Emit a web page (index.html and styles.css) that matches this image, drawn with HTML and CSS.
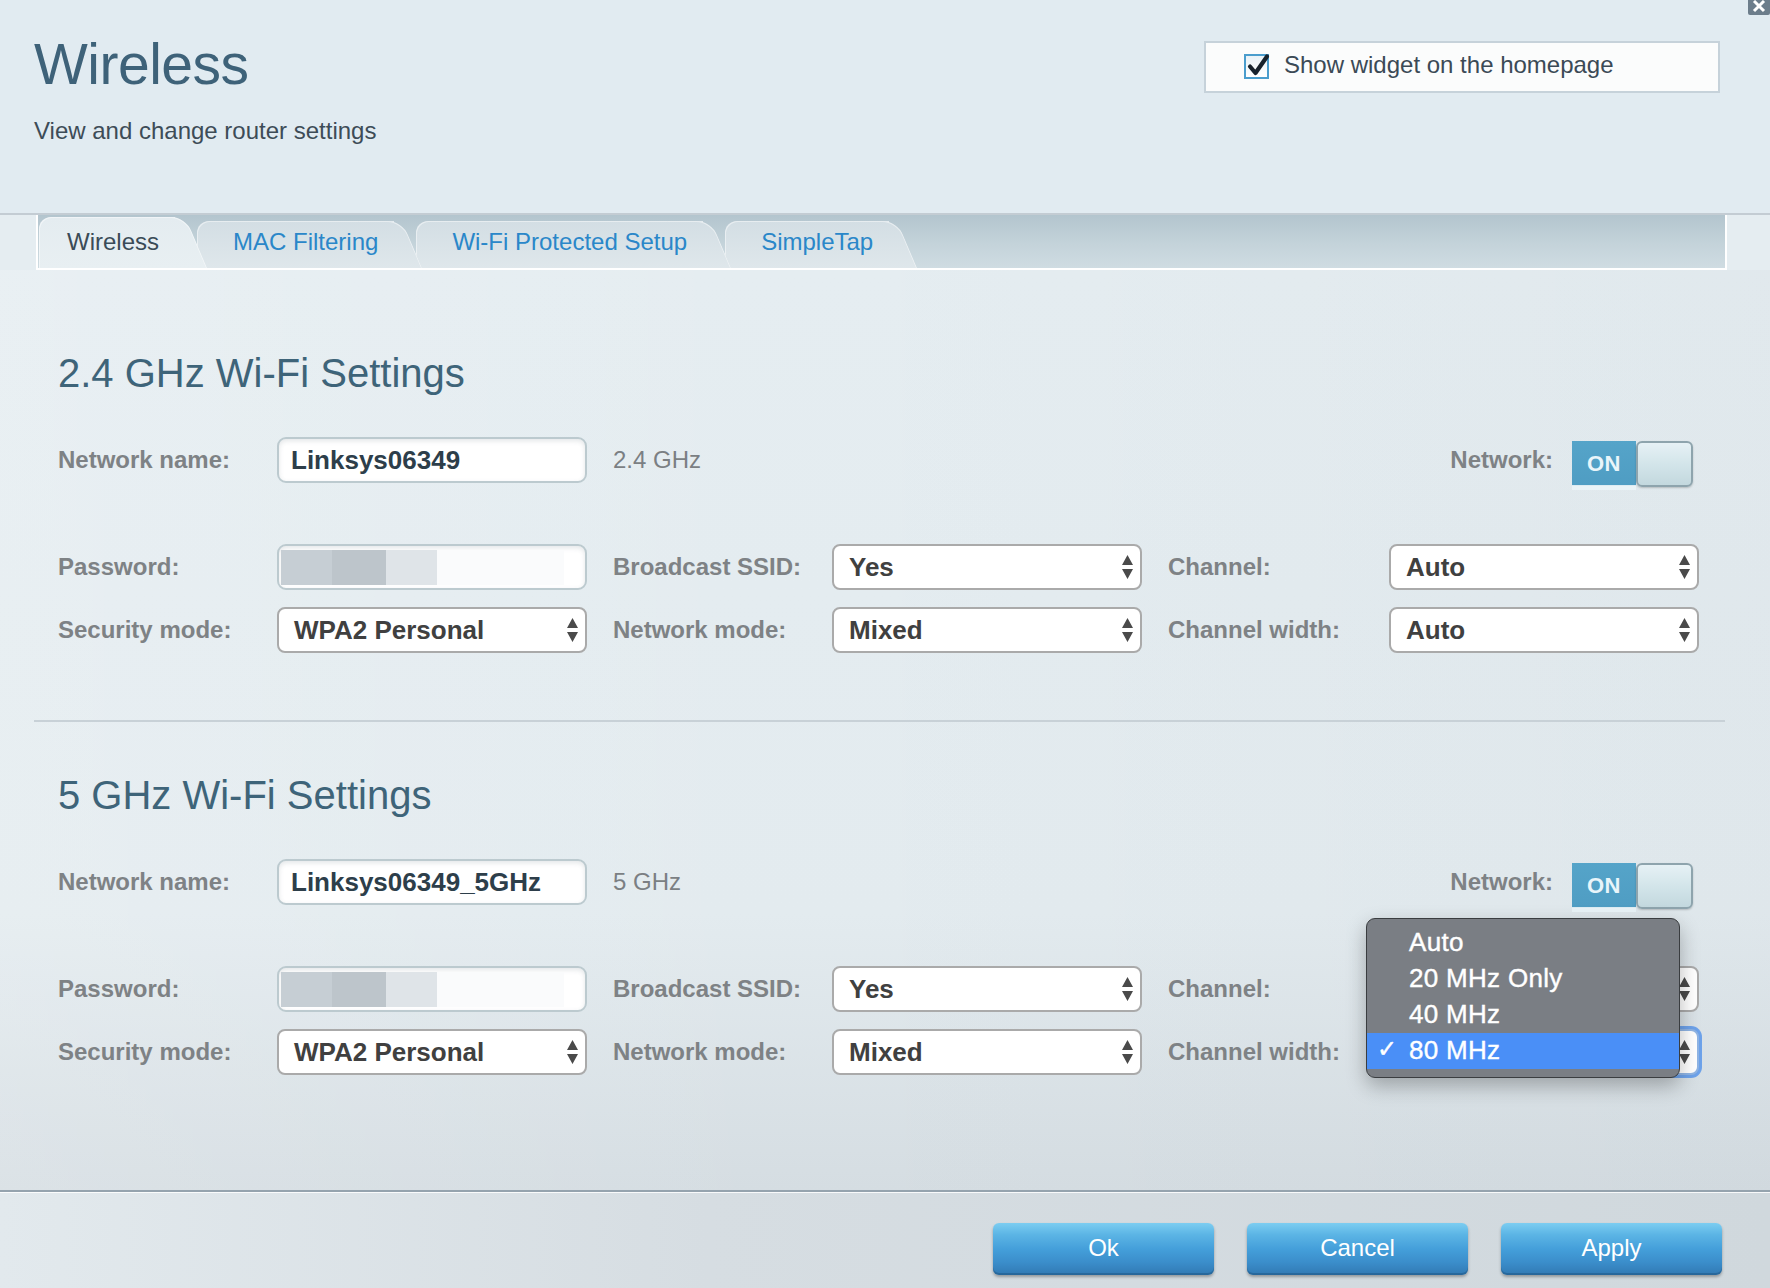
FILE: index.html
```html
<!DOCTYPE html>
<html lang="en">
<head>
<meta charset="utf-8">
<title>Wireless</title>
<link rel="stylesheet" href="styles.css">
</head>
<body>
<div class="page">
  <header class="header">
    <div class="title-block">
      <h1 class="title">Wireless</h1>
      <p class="subtitle">View and change router settings</p>
    </div>
    <label class="widget-box">
      <span class="checkbox">
        <svg width="27" height="27" viewBox="0 0 27 27"><path d="M5 13.5 L10.5 20 L22 3.5" fill="none" stroke="#17222c" stroke-width="4.2" stroke-linecap="round" stroke-linejoin="round"/></svg>
      </span>
      <span class="widget-text">Show widget on the homepage</span>
    </label>
    <span class="close-icon">
      <svg width="22" height="15" viewBox="0 0 22 15"><rect x="0" y="-4" width="22" height="19" rx="2" fill="#6c7d8b"/><path d="M6 1 L11 6 L16 1 M6 11 L11 6 L16 11" fill="none" stroke="#ffffff" stroke-width="3"/></svg>
    </span>
  </header>

  <nav class="tabbar">
    <span class="tab active">Wireless</span>
    <span class="tab">MAC Filtering</span>
    <span class="tab">Wi-Fi Protected Setup</span>
    <span class="tab">SimpleTap</span>
  </nav>

  <main class="content">
    <section class="wifi">
      <h2 class="section-title">2.4 GHz Wi-Fi Settings</h2>
      <div class="row row-first">
        <span class="label">Network name:</span>
        <span class="field input">Linksys06349</span>
        <span class="band">2.4 GHz</span>
        <span class="net-group">
          <span class="label">Network:</span>
          <span class="toggle"><span class="toggle-on">ON</span><span class="toggle-knob"></span></span>
        </span>
      </div>
      <div class="row row-second">
        <span class="label">Password:</span>
        <span class="field input password"><span class="pw b1"></span><span class="pw b2"></span><span class="pw b3"></span><span class="pw b4"></span></span>
        <span class="label label-mid">Broadcast SSID:</span>
        <span class="field select">Yes<svg class="arrows" width="11" height="24" viewBox="0 0 11 24"><path d="M0 10 L5.5 0 L11 10 Z M0 14 L11 14 L5.5 24 Z" fill="#4a4a4a"/></svg></span>
        <span class="label label-mid">Channel:</span>
        <span class="field select">Auto<svg class="arrows" width="11" height="24" viewBox="0 0 11 24"><path d="M0 10 L5.5 0 L11 10 Z M0 14 L11 14 L5.5 24 Z" fill="#4a4a4a"/></svg></span>
      </div>
      <div class="row row-third">
        <span class="label">Security mode:</span>
        <span class="field select">WPA2 Personal<svg class="arrows" width="11" height="24" viewBox="0 0 11 24"><path d="M0 10 L5.5 0 L11 10 Z M0 14 L11 14 L5.5 24 Z" fill="#4a4a4a"/></svg></span>
        <span class="label label-mid">Network mode:</span>
        <span class="field select">Mixed<svg class="arrows" width="11" height="24" viewBox="0 0 11 24"><path d="M0 10 L5.5 0 L11 10 Z M0 14 L11 14 L5.5 24 Z" fill="#4a4a4a"/></svg></span>
        <span class="label label-mid">Channel width:</span>
        <span class="field select">Auto<svg class="arrows" width="11" height="24" viewBox="0 0 11 24"><path d="M0 10 L5.5 0 L11 10 Z M0 14 L11 14 L5.5 24 Z" fill="#4a4a4a"/></svg></span>
      </div>
    </section>

    <hr class="divider">

    <section class="wifi wifi-second">
      <h2 class="section-title">5 GHz Wi-Fi Settings</h2>
      <div class="row row-first">
        <span class="label">Network name:</span>
        <span class="field input">Linksys06349_5GHz</span>
        <span class="band">5 GHz</span>
        <span class="net-group">
          <span class="label">Network:</span>
          <span class="toggle"><span class="toggle-on">ON</span><span class="toggle-knob"></span></span>
        </span>
      </div>
      <div class="row row-second">
        <span class="label">Password:</span>
        <span class="field input password"><span class="pw b1"></span><span class="pw b2"></span><span class="pw b3"></span><span class="pw b4"></span></span>
        <span class="label label-mid">Broadcast SSID:</span>
        <span class="field select">Yes<svg class="arrows" width="11" height="24" viewBox="0 0 11 24"><path d="M0 10 L5.5 0 L11 10 Z M0 14 L11 14 L5.5 24 Z" fill="#4a4a4a"/></svg></span>
        <span class="label label-mid">Channel:</span>
        <span class="field select"><svg class="arrows" width="11" height="24" viewBox="0 0 11 24"><path d="M0 10 L5.5 0 L11 10 Z M0 14 L11 14 L5.5 24 Z" fill="#4a4a4a"/></svg></span>
      </div>
      <div class="row row-third">
        <span class="label">Security mode:</span>
        <span class="field select">WPA2 Personal<svg class="arrows" width="11" height="24" viewBox="0 0 11 24"><path d="M0 10 L5.5 0 L11 10 Z M0 14 L11 14 L5.5 24 Z" fill="#4a4a4a"/></svg></span>
        <span class="label label-mid">Network mode:</span>
        <span class="field select">Mixed<svg class="arrows" width="11" height="24" viewBox="0 0 11 24"><path d="M0 10 L5.5 0 L11 10 Z M0 14 L11 14 L5.5 24 Z" fill="#4a4a4a"/></svg></span>
        <span class="label label-mid">Channel width:</span>
        <span class="field select focused"><svg class="arrows" width="11" height="24" viewBox="0 0 11 24"><path d="M0 10 L5.5 0 L11 10 Z M0 14 L11 14 L5.5 24 Z" fill="#4a4a4a"/></svg>
          <span class="menu">
            <span class="menu-item">Auto</span>
            <span class="menu-item">20 MHz Only</span>
            <span class="menu-item">40 MHz</span>
            <span class="menu-item selected"><span class="tick">✓</span>80 MHz</span>
          </span>
        </span>
      </div>
    </section>
  </main>

  <footer class="footer">
    <button class="btn">Ok</button>
    <button class="btn">Cancel</button>
    <button class="btn">Apply</button>
  </footer>
</div>
</body>
</html>
```
FILE: styles.css
```css
* { box-sizing: border-box; }

body {
  margin: 0;
  width: 1770px;
  height: 1288px;
  overflow: hidden;
  font-family: "Liberation Sans", Arial, Helvetica, sans-serif;
  background: #e5edf1;
}

.page {
  display: flex;
  flex-direction: column;
  height: 1288px;
  background: #e5edf1;
}

/* ---------- header ---------- */
.header {
  position: relative;
  flex: none;
  height: 215px;
  background: #e1ebf1;
  border-bottom: 2px solid #c3ccd3;
  display: flex;
  justify-content: space-between;
  align-items: flex-start;
  padding: 0 50px 0 34px;
}

.title {
  margin: 32px 0 0;
  font-size: 57px;
  font-weight: 400;
  line-height: 64px;
  color: #3e6279;
  letter-spacing: -0.5px;
}

.subtitle {
  margin: 21px 0 0;
  font-size: 24px;
  line-height: 28px;
  color: #3d4c57;
}

.widget-box {
  margin-top: 41px;
  width: 516px;
  height: 52px;
  border: 2px solid #c6d2da;
  background: #fbfcfc;
  display: flex;
  align-items: center;
  padding-left: 38px;
  gap: 15px;
}

.checkbox {
  position: relative;
  width: 25px;
  height: 25px;
  margin-bottom: 2px;
  border: 2px solid #4a9dcd;
  background: linear-gradient(#e9f2f7, #ffffff);
  display: flex;
  align-items: center;
  justify-content: center;
}

.checkbox svg {
  position: absolute;
  left: -1px;
  top: -3px;
}

.widget-text {
  font-size: 24px;
  color: #3b4a56;
  padding-bottom: 5px;
}

.close-icon {
  position: absolute;
  top: 0;
  right: 0;
  width: 22px;
  height: 15px;
  display: block;
}

.close-icon svg { display: block; }

/* ---------- tabs ---------- */
.tabbar {
  flex: none;
  height: 55px;
  margin: 0 43px 0 36px;
  border: 2px solid #ffffff;
  border-top: 0;
  background: linear-gradient(180deg, #b3c5ce 0%, #c4d3da 55%, #cfdce2 100%);
  display: flex;
  align-items: flex-end;
  padding-left: 1px;
}

.tab {
  position: relative;
  height: 47px;
  padding: 0 16px 5px 36px;
  margin-right: 22px;
  display: flex;
  align-items: center;
  font-size: 24px;
  color: #2a87c9;
  background: linear-gradient(180deg, #d3dee4 0%, #dfe7eb 100%);
  border-top-left-radius: 12px;
  box-shadow: inset 1px 1px 0 rgba(255,255,255,0.45);
  z-index: 3;
}

.tab::after {
  content: "";
  position: absolute;
  top: 0;
  bottom: 0;
  right: -28px;
  width: 44px;
  background: linear-gradient(180deg, #d3dee4 0%, #dfe7eb 100%);
  border-top-right-radius: 14px;
  box-shadow: inset -1px 1px 0 rgba(255,255,255,0.45);
  transform: skewX(23deg);
  transform-origin: bottom left;
  z-index: -1;
}

.tab:nth-child(2) { z-index: 3; }
.tab:nth-child(3) { z-index: 2; }
.tab:nth-child(4) { z-index: 1; }

.tab.active {
  height: 51px;
  padding-left: 28px;
  padding-bottom: 2px;
  color: #3a4b57;
  background: linear-gradient(180deg, #e4ecf0 0%, #e8eff2 100%);
  z-index: 5;
}

.tab.active::after {
  right: -32px;
  background: linear-gradient(180deg, #e4ecf0 0%, #e8eff2 100%);
}

/* ---------- content ---------- */
.content {
  flex: 1;
  background:
    linear-gradient(90deg, rgba(255,255,255,0.15) 0%, rgba(255,255,255,0) 45%, rgba(0,20,40,0.02) 100%),
    linear-gradient(180deg, #e5edf1 0%, #e3ebef 70%, #d5dde2 100%);
}

.wifi {
  padding: 79px 0 0 58px;
}

.wifi-second {
  padding-top: 49px;
}

.section-title {
  margin: 0 0 40px;
  font-size: 40px;
  font-weight: 400;
  line-height: 48px;
  color: #3e6479;
}

.row {
  display: grid;
  grid-template-columns: 219px 310px 245px 310px 247px 310px;
  grid-template-rows: 46px;
  height: 46px;
  align-items: center;
}

.row-first { margin-bottom: 61px; }
.row-second { margin-bottom: 17px; }

.label {
  font-size: 24px;
  font-weight: 700;
  color: #7e8285;
  white-space: nowrap;
}

.label-mid { padding-left: 26px; }

.band {
  grid-column: 3 / 5;
  padding-left: 26px;
  font-size: 24px;
  color: #7b7f83;
}

.net-group {
  grid-column: 5 / 7;
  height: 46px;
  display: flex;
  justify-content: flex-end;
  align-items: center;
  gap: 19px;
  padding-right: 6px;
}

.field {
  height: 46px;
  display: flex;
  align-items: center;
  font-size: 26px;
  font-weight: 700;
  white-space: nowrap;
}

.input {
  border: 2px solid #bccacf;
  border-radius: 9px;
  background: #ffffff;
  box-shadow: inset 0 2px 5px rgba(60, 80, 90, 0.14);
  padding-left: 12px;
  color: #2d3e4a;
}

.input.password {
  padding-left: 2px;
}

.pw { display: block; height: 35px; }
.b1 { width: 51px; background: #c6ced4; }
.b2 { width: 54px; background: #bdc5cb; }
.b3 { width: 51px; background: #dfe4e8; }
.b4 { width: 127px; background: #fafbfc; }

.select {
  position: relative;
  border: 2px solid #aaaaaa;
  border-radius: 8px;
  background: #ffffff;
  padding-left: 15px;
  color: #404040;
}

.arrows {
  position: absolute;
  right: 7px;
  top: 9px;
}

.select.focused {
  box-shadow: 0 0 0 3px #6da2ea;
  border-color: #8fb4e4;
}

/* ---------- toggle ---------- */
.toggle {
  display: flex;
  align-self: flex-start;
  width: 121px;
  height: 49px;
  margin-top: 4px;
  flex: none;
}

.toggle-on {
  width: 64px;
  height: 49px;
  display: flex;
  align-items: center;
  justify-content: center;
  padding-bottom: 4px;
  font-size: 22px;
  font-weight: 700;
  letter-spacing: 0.5px;
  color: #e9f5fa;
  background: linear-gradient(180deg, #55a4c9 0%, #4f9dc3 89%, #e9f3f7 91%, #e9f3f7 100%);
}

.toggle-knob {
  width: 57px;
  height: 46px;
  border: 2px solid #8ea4ad;
  border-radius: 6px;
  background: linear-gradient(180deg, #e6f1f5 0%, #d3e5ea 50%, #c3d8de 100%);
  box-shadow: 0 1px 2px rgba(0,0,0,0.2);
}

/* ---------- dropdown menu ---------- */
.menu {
  position: absolute;
  left: -25px;
  top: -113px;
  width: 314px;
  padding: 6px 0 8px;
  border: 1px solid #3a3d40;
  border-radius: 9px;
  background: #7a7e84;
  box-shadow: 0 8px 20px rgba(0, 0, 0, 0.28);
  display: flex;
  flex-direction: column;
  z-index: 10;
}

.menu-item {
  position: relative;
  height: 36px;
  display: flex;
  align-items: center;
  padding-left: 42px;
  padding-bottom: 2px;
  font-size: 26px;
  font-weight: 400;
  letter-spacing: 0.3px;
  color: #ffffff;
  -webkit-text-stroke: 0.4px #ffffff;
}

.menu-item.selected {
  background: #4a8ff7;
}

.tick {
  position: absolute;
  left: 10px;
  top: 2px;
  font-family: "DejaVu Sans", sans-serif;
  font-size: 24px;
}

/* ---------- divider ---------- */
.divider {
  margin: 67px 45px 0 34px;
  height: 2px;
  border: 0;
  background: #c8d1d7;
}

/* ---------- footer ---------- */
.footer {
  flex: none;
  height: 98px;
  border-top: 2px solid #95a3ae;
  box-shadow: inset 0 1px 0 rgba(255,255,255,0.85);
  background: linear-gradient(90deg, #e2e9ed 0%, #d6dde2 40%, #d0d8dd 100%);
  display: flex;
  justify-content: flex-end;
  align-items: flex-start;
  gap: 33px;
  padding: 31px 48px 0 0;
}

.btn {
  width: 221px;
  height: 52px;
  border: 0;
  border-radius: 6px;
  font-family: "Liberation Sans", Arial, sans-serif;
  font-size: 24px;
  color: #ffffff;
  background: linear-gradient(180deg, #7ccdf1 0%, #5cb5e5 22%, #449fda 50%, #3b8ecb 75%, #3179b3 100%);
  box-shadow: 0 2px 3px rgba(0, 0, 0, 0.3), inset 0 -2px 0 rgba(20, 70, 110, 0.35);
  padding: 0 0 2px;
}
```
